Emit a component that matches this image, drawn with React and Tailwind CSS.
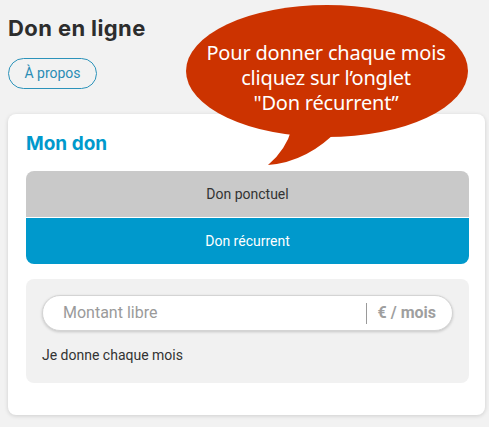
export default function App() {
  return (
    <div className="relative min-h-screen bg-[#f2f2f2] px-2 pt-[13px] font-['Roboto',sans-serif]">
      <h1 className="font-['Inter',sans-serif] text-[22px] font-bold leading-[30px] tracking-[0.4px] text-[#2d2d2d]">
        Don en ligne
      </h1>
      <button className="mt-[15px] flex h-[31px] w-[89px] items-center justify-center rounded-full border border-[#2c93ba] text-[14px] text-[#2a8db5]">
        À propos
      </button>

      <div className="mt-[25px] w-[477px] rounded-lg bg-white pb-[32px] pl-[18px] pr-[16px] pt-[16px] shadow-[0_1px_4px_rgba(0,0,0,0.15)]">
        <h2 className="font-['Inter',sans-serif] text-[19px] font-bold leading-[28px] text-[#0099cc]">Mon don</h2>

        <div className="mt-[13px] overflow-hidden rounded-lg">
          <div className="flex h-[46px] items-center justify-center bg-[#c9c9c9] text-[14px] text-[#333]">
            Don ponctuel
          </div>
          <div className="h-px bg-white" />
          <div className="flex h-[46px] items-center justify-center bg-[#0099cc] text-[14px] text-white">
            Don récurrent
          </div>
        </div>

        <div className="mt-[15px] rounded-lg bg-[#f1f1f1] px-4 pb-[18px] pt-4">
          <div className="flex h-[36px] items-center rounded-full border border-[#d4d4d4] bg-white pl-[20px] pr-[16px] shadow-[0_1px_3px_rgba(0,0,0,0.18)]">
            <span className="flex-1 text-[16px] text-[#9a9a9a]">Montant libre</span>
            <span className="h-[21px] w-px bg-[#9a9a9a]" />
            <span className="ml-[11px] text-[16px] font-bold text-[#9f9f9f]">€ / mois</span>
          </div>
          <p className="mt-[14px] text-[14px] leading-5 text-[#333]">Je donne chaque mois</p>
        </div>
      </div>

      <div className="absolute left-[180px] top-0 h-[170px] w-[300px]">
        <svg className="absolute inset-0" width="300" height="170" viewBox="0 0 300 170">
          <ellipse cx="147" cy="71" rx="141" ry="66" fill="#cc3300" />
          <path d="M112 128 Q106 150 88 165 Q128 162 160 128 Z" fill="#cc3300" />
        </svg>
        <div className="absolute left-0 top-[40px] w-[292px] text-center font-['Noto_Sans',sans-serif] text-[20px] leading-[25px] tracking-[-0.2px] text-white">
          Pour donner chaque mois
          <br />
          cliquez sur l’onglet
          <br />
          "Don récurrent”
        </div>
      </div>
    </div>
  )
}
